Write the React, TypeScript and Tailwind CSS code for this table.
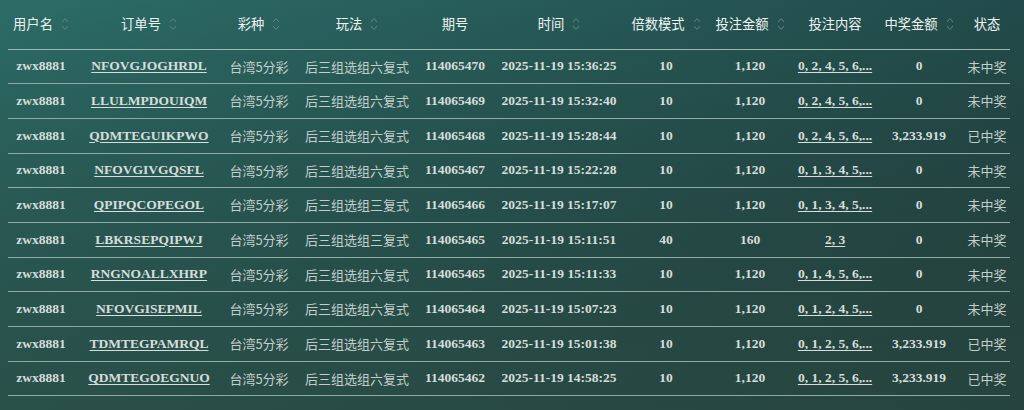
import React from 'react';

type Row = {
  user: string;
  order: string;
  lottery: string;
  play: string;
  issue: string;
  time: string;
  multiple: string;
  amount: string;
  content: string;
  prize: string;
  status: string;
};

const rows: Row[] = [
  { user: 'zwx8881', order: 'NFOVGJOGHRDL', lottery: '台湾5分彩', play: '后三组选组六复式', issue: '114065470', time: '2025-11-19 15:36:25', multiple: '10', amount: '1,120', content: '0, 2, 4, 5, 6,...', prize: '0', status: '未中奖' },
  { user: 'zwx8881', order: 'LLULMPDOUIQM', lottery: '台湾5分彩', play: '后三组选组六复式', issue: '114065469', time: '2025-11-19 15:32:40', multiple: '10', amount: '1,120', content: '0, 2, 4, 5, 6,...', prize: '0', status: '未中奖' },
  { user: 'zwx8881', order: 'QDMTEGUIKPWO', lottery: '台湾5分彩', play: '后三组选组六复式', issue: '114065468', time: '2025-11-19 15:28:44', multiple: '10', amount: '1,120', content: '0, 2, 4, 5, 6,...', prize: '3,233.919', status: '已中奖' },
  { user: 'zwx8881', order: 'NFOVGIVGQSFL', lottery: '台湾5分彩', play: '后三组选组六复式', issue: '114065467', time: '2025-11-19 15:22:28', multiple: '10', amount: '1,120', content: '0, 1, 3, 4, 5,...', prize: '0', status: '未中奖' },
  { user: 'zwx8881', order: 'QPIPQCOPEGOL', lottery: '台湾5分彩', play: '后三组选组三复式', issue: '114065466', time: '2025-11-19 15:17:07', multiple: '10', amount: '1,120', content: '0, 1, 3, 4, 5,...', prize: '0', status: '未中奖' },
  { user: 'zwx8881', order: 'LBKRSEPQIPWJ', lottery: '台湾5分彩', play: '后三组选组三复式', issue: '114065465', time: '2025-11-19 15:11:51', multiple: '40', amount: '160', content: '2, 3', prize: '0', status: '未中奖' },
  { user: 'zwx8881', order: 'RNGNOALLXHRP', lottery: '台湾5分彩', play: '后三组选组六复式', issue: '114065465', time: '2025-11-19 15:11:33', multiple: '10', amount: '1,120', content: '0, 1, 4, 5, 6,...', prize: '0', status: '未中奖' },
  { user: 'zwx8881', order: 'NFOVGISEPMIL', lottery: '台湾5分彩', play: '后三组选组六复式', issue: '114065464', time: '2025-11-19 15:07:23', multiple: '10', amount: '1,120', content: '0, 1, 2, 4, 5,...', prize: '0', status: '未中奖' },
  { user: 'zwx8881', order: 'TDMTEGPAMRQL', lottery: '台湾5分彩', play: '后三组选组六复式', issue: '114065463', time: '2025-11-19 15:01:38', multiple: '10', amount: '1,120', content: '0, 1, 2, 5, 6,...', prize: '3,233.919', status: '已中奖' },
  { user: 'zwx8881', order: 'QDMTEGOEGNUO', lottery: '台湾5分彩', play: '后三组选组六复式', issue: '114065462', time: '2025-11-19 14:58:25', multiple: '10', amount: '1,120', content: '0, 1, 2, 5, 6,...', prize: '3,233.919', status: '已中奖' },
];

const columns = [
  { label: '用户名', width: 'w-[66px]', sort: true },
  { label: '订单号', width: 'w-[150px]', sort: true },
  { label: '彩种', width: 'w-[70px]', sort: true },
  { label: '玩法', width: 'w-[126px]', sort: true },
  { label: '期号', width: 'w-[70px]', sort: false },
  { label: '时间', width: 'w-[138px]', sort: true },
  { label: '倍数模式', width: 'w-[76px]', sort: true },
  { label: '投注金额', width: 'w-[92px]', sort: true },
  { label: '投注内容', width: 'w-[78px]', sort: false },
  { label: '中奖金额', width: 'w-[90px]', sort: true },
  { label: '状态', width: 'w-[46px]', sort: false },
];

const serif = "font-['Liberation_Serif',serif] font-bold text-[13.5px] text-[#d6dddb]";
const cjk = "font-['Noto_Sans_CJK_SC',sans-serif] text-[13px] text-[#c3cecc]";

function SortIcon() {
  return (
    <svg width="8" height="16" viewBox="0 0 8 16" fill="none" className="ml-[8px] shrink-0">
      <path d="M1 6 L4 2.5 L7 6" stroke="#64827e" strokeWidth="1" />
      <path d="M1 10 L4 13.5 L7 10" stroke="#64827e" strokeWidth="1" />
    </svg>
  );
}

export default function App() {
  return (
    <div className="w-[1024px] h-[410px] overflow-hidden bg-linear-to-br from-[#2c6d67] via-[#214b4a] to-[#1a2c2e]">
      <div className="h-full bg-linear-to-t from-[#2f5449]/60 to-transparent">
        <table className="ml-2 w-[1002px] table-fixed border-collapse">
          <colgroup>
            {columns.map(c => (
              <col key={c.label} className={c.width} />
            ))}
          </colgroup>
          <thead>
            <tr className="h-[49px] border-b border-[#9bb7b1]">
              {columns.map(c => (
                <th key={c.label} className="p-0 font-normal">
                  <div className="flex items-center justify-center font-['Noto_Sans_CJK_SC',sans-serif] text-[13.3px] text-[#eef3f2] whitespace-nowrap">
                    {c.label}
                    {c.sort && <SortIcon />}
                  </div>
                </th>
              ))}
            </tr>
          </thead>
          <tbody>
            {rows.map((r, i) => (
              <tr key={i} className="h-[34.7px] border-b border-[#8eaba5] text-center whitespace-nowrap">
                <td className={`p-0 ${serif}`}>{r.user}</td>
                <td className={`p-0 ${serif}`}>
                  <span className="underline underline-offset-2">{r.order}</span>
                </td>
                <td className={`p-0 ${cjk}`}>{r.lottery}</td>
                <td className={`p-0 ${cjk}`}>{r.play}</td>
                <td className={`p-0 ${serif}`}>{r.issue}</td>
                <td className={`p-0 ${serif}`}>{r.time}</td>
                <td className={`p-0 ${serif}`}>{r.multiple}</td>
                <td className={`p-0 ${serif}`}>{r.amount}</td>
                <td className={`p-0 ${serif}`}>
                  <span className="underline underline-offset-2">{r.content}</span>
                </td>
                <td className={`p-0 ${serif}`}>{r.prize}</td>
                <td className={`p-0 ${cjk}`}>{r.status}</td>
              </tr>
            ))}
          </tbody>
        </table>
      </div>
    </div>
  );
}
